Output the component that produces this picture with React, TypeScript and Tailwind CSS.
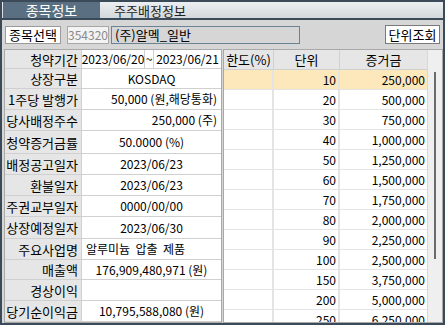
import React from "react";

const font = { fontFamily: "'Noto Sans CJK KR', 'Noto Sans', sans-serif" };

type Row = { label: string; value?: React.ReactNode; align: string; h: string };

const leftRows: Row[] = [
  { label: "상장구분", value: "KOSDAQ", align: "justify-center", h: "h-[20px]" },
  { label: "1주당 발행가", value: "50,000 (원,해당통화)", align: "justify-end", h: "h-[21px]" },
  { label: "당사배정주수", value: "250,000 (주)", align: "justify-end", h: "h-[21px]" },
  { label: "청약증거금률", value: "50.0000 (%)", align: "justify-center", h: "h-[23px]" },
  { label: "배정공고일자", value: "2023/06/23", align: "justify-center", h: "h-[21px]" },
  { label: "환불일자", value: "2023/06/23", align: "justify-center", h: "h-[21px]" },
  { label: "주권교부일자", value: "0000/00/00", align: "justify-center", h: "h-[21px]" },
  { label: "상장예정일자", value: "2023/06/30", align: "justify-center", h: "h-[22px]" },
  { label: "주요사업명", value: "알루미늄  압출  제품", align: "justify-start", h: "h-[21px]" },
  { label: "매출액", value: "176,909,480,971 (원)", align: "justify-center", h: "h-[20px]" },
  { label: "경상이익", value: "", align: "justify-center", h: "h-[21px]" },
  { label: "당기순이익금", value: "10,795,588,080 (원)", align: "justify-center", h: "h-[21px]" },
];

const rightRows = [
  ["10", "250,000"],
  ["20", "500,000"],
  ["30", "750,000"],
  ["40", "1,000,000"],
  ["50", "1,250,000"],
  ["60", "1,500,000"],
  ["70", "1,750,000"],
  ["80", "2,000,000"],
  ["90", "2,250,000"],
  ["100", "2,500,000"],
  ["150", "3,750,000"],
  ["200", "5,000,000"],
  ["250", "6,250,000"],
];

export default function App() {
  return (
    <div
      className="w-[445px] h-[325px] bg-[#3b4a58] p-[2px] flex flex-col overflow-hidden text-[12px] text-black leading-none"
      style={font}
    >
      {/* Tab bar */}
      <div className="h-[16px] flex items-stretch bg-gradient-to-b from-[#eceff1] to-[#d3d7db] border-b-[2px] border-[#3b4a58] box-content">
        <div className="w-[97px] ml-[1px] bg-[#5b6f82] text-white flex items-center justify-center text-[14px]">
          종목정보
        </div>
        <div className="w-[100px] flex items-center justify-center text-[13px] text-[#222]">
          주주배정정보
        </div>
      </div>

      {/* Content */}
      <div className="flex-1 bg-[#d6d6d6] flex flex-col overflow-hidden">
        {/* Search row */}
        <div className="h-[27px] flex items-center px-[3px] pt-[4px] pb-[2px]">
          <div className="w-[56px] h-[18px] bg-white border border-[#9a9a9a] flex items-center justify-center text-[13px]">
            종목선택
          </div>
          <div className="w-[42px] h-[18px] ml-[6px] bg-[#f3f3f3] border border-[#a8a8a8] flex items-center justify-center text-[#8a8a8a] text-[12px]">
            354320
          </div>
          <div className="w-[189px] h-[18px] ml-[2px] bg-[#d6d6d6] border border-[#6a8494] flex items-center pl-[3px] text-[13px]">
            (주)알멕_일반
          </div>
          <div className="flex-1" />
          <div className="w-[55px] h-[19px] bg-white border border-[#7a7a7a] flex items-center justify-center text-[13px]">
            단위조회
          </div>
        </div>

        {/* Tables */}
        <div className="flex-1 flex pl-[2px] pt-[2px] overflow-hidden">
          {/* Left table */}
          <div className="w-[218px] border border-[#a9a9a9] bg-white flex flex-col overflow-hidden">
            <div className="h-[19px] flex border-b border-[#d0d0d0] shrink-0">
              <div className="w-[77px] bg-[#e6e6e6] border-r border-[#d0d0d0] flex items-center justify-end pr-[3px] text-[13px]">
                청약기간
              </div>
              <div className="flex-1 flex items-stretch">
                <div className="w-[63px] flex items-center justify-center border-r border-[#d0d0d0]">
                  2023/06/20
                </div>
                <div className="w-[9px] flex items-center justify-center border-r border-[#d0d0d0]">
                  ~
                </div>
                <div className="flex-1 flex items-center justify-center">
                  2023/06/21
                </div>
              </div>
            </div>
            {leftRows.map((r, i) => (
              <div
                key={i}
                className={`${r.h} flex border-b border-[#d0d0d0] shrink-0`}
              >
                <div className="w-[77px] bg-[#e6e6e6] border-r border-[#d0d0d0] flex items-center justify-end pr-[3px] text-[13px] whitespace-nowrap">
                  {r.label}
                </div>
                <div
                  className={`flex-1 flex items-center px-[4px] whitespace-pre ${r.align}`}
                >
                  {r.value}
                </div>
              </div>
            ))}
          </div>

          {/* Right table */}
          <div className="w-[220px] ml-[1px] border border-[#a9a9a9] bg-white flex overflow-hidden">
            <div className="w-[203px] flex flex-col">
              <div className="h-[20px] flex bg-[#e6e6e6] border-b border-[#d0d0d0] shrink-0 text-[13px]">
                <div className="w-[50px] border-r border-[#d0d0d0] flex items-center justify-center">
                  한도(%)
                </div>
                <div className="w-[66px] border-r border-[#d0d0d0] flex items-center justify-center">
                  단위
                </div>
                <div className="flex-1 flex items-center justify-center">
                  증거금
                </div>
              </div>
              {rightRows.map((r, i) => (
                <div
                  key={i}
                  className={`h-[20px] flex border-b border-[#e4e4e4] shrink-0 ${
                    i === 0 ? "bg-[#fde8bc]" : "bg-white"
                  }`}
                >
                  <div className="w-[50px] border-r-[2px] border-[#e4e4e4]" />
                  <div className="w-[66px] border-r-[2px] border-[#e4e4e4] flex items-center justify-end pr-[2px]">
                    {r[0]}
                  </div>
                  <div className="flex-1 flex items-center justify-end pr-[2px]">
                    {r[1]}
                  </div>
                </div>
              ))}
            </div>
            <div className="flex-1 bg-[#efefef] border-l border-[#d8d8d8] flex justify-center pt-[20px]">
              <div className="w-[2px] h-[187px] bg-[#6a6a6a] mt-[2px]" />
            </div>
          </div>
        </div>
      </div>
    </div>
  );
}
